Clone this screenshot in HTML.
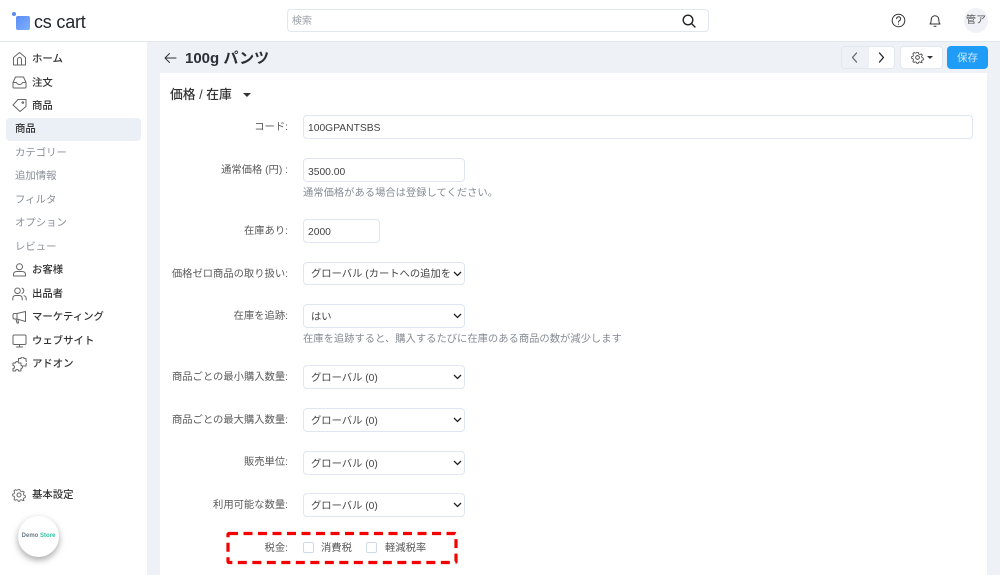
<!DOCTYPE html>
<html lang="ja"><head><meta charset="utf-8"><title>CS-Cart</title>
<style>
html,body{margin:0;padding:0;width:1000px;height:575px;overflow:hidden;background:#eef2f7;font-family:"Liberation Sans","Noto Sans CJK JP",sans-serif;color:#333}
*{box-sizing:border-box}
.a{position:absolute;white-space:nowrap}
#hd{position:absolute;left:0;top:0;width:1000px;height:42px;background:#fff;border-bottom:1px solid #e2e6ee}
#sb{position:absolute;left:0;top:42px;width:147px;height:533px;background:#fff}
#card{position:absolute;left:160px;top:73px;width:827px;height:502px;background:#fff}
.n{position:absolute;left:32px;font-size:10.4px;line-height:16px;font-weight:500;color:#333;white-space:nowrap;margin-top:2px}
.s{position:absolute;left:15px;font-size:10.4px;line-height:16px;color:#8a8f97;white-space:nowrap;margin-top:2px}
.l{position:absolute;right:712px;font-size:10.3px;line-height:16px;color:#5a5a5a;text-align:right;white-space:nowrap;margin-top:2px}
.f{position:absolute;left:303px;background:#fff;border:1px solid #dfe6f1;border-radius:4px;font-size:10.3px;color:#444;padding-left:4px;white-space:nowrap;overflow:hidden}
.sel{width:162px;padding-left:7px}
.sel svg{position:absolute;right:2px;top:8px}
.h{position:absolute;left:303px;font-size:10.3px;line-height:14px;color:#868b93;white-space:nowrap}
svg.i{position:absolute;fill:none;stroke:#666;stroke-width:1;stroke-linecap:round;stroke-linejoin:round}
</style></head><body>
<div id="hd"></div>
<div id="sb"></div>
<div id="card"></div>

<!-- logo -->
<div class="a" style="left:16px;top:16px;width:14px;height:14px;border-radius:2px;background:linear-gradient(135deg,#5b8cf7,#7fb0fb)"></div>
<div class="a" style="left:12px;top:12px;width:4px;height:4px;border-radius:50%;background:#5b8cf7"></div>
<div class="a" style="left:34px;top:12px;font-size:18px;line-height:20px;color:#20242e;letter-spacing:-.2px">cs cart</div>

<!-- search -->
<div class="a" style="left:287px;top:9px;width:422px;height:23px;border:1px solid #e2e6ee;border-radius:4px;background:#fff"></div>
<div class="a" style="left:292px;top:15px;font-size:10px;line-height:14px;color:#9a9ea6">検索</div>
<svg class="i" style="left:682px;top:14px;stroke:#222;stroke-width:1.4" width="14" height="14" viewBox="0 0 14 14"><circle cx="6" cy="6" r="4.8"/><path d="M9.6 9.6L13 13"/></svg>

<!-- top right -->
<svg class="i" style="left:891px;top:13px;stroke:#333" width="15" height="15" viewBox="0 0 15 15"><circle cx="7.5" cy="7.5" r="6.3"/><path d="M5.6 5.8a2 2 0 1 1 2.9 1.8c-.7.4-1 .8-1 1.5"/><path d="M7.5 11v.2"/></svg>
<svg class="i" style="left:928px;top:13px;stroke:#333" width="14" height="15" viewBox="0 0 14 15"><path d="M2 11c1-1 1.2-2 1.2-4.500a3.800 3.800 0 0 1 7.600 0C10.800 9 11 10 12 11z"/><path d="M6 13.300h2"/></svg>
<div class="a" style="left:964px;top:8px;width:24px;height:25px;border-radius:50%;background:#eff1f6;font-size:10px;line-height:25px;text-align:center;color:#555">管ア</div>

<!-- sidebar -->
<svg class="i" style="left:12px;top:51px" width="15" height="15" viewBox="0 0 15 15"><path d="M1.500 6.500L7.500 1.500l6 5V14h-12z"/><path d="M5.500 14V8.500a2 2 0 0 1 4 0V14"/></svg>
<div class="n" style="top:50px">ホーム</div>
<svg class="i" style="left:12px;top:75px" width="15" height="14" viewBox="0 0 15 14"><path d="M1 7.500L3.500 2h8L14 7.500V12a1 1 0 0 1-1 1H2a1 1 0 0 1-1-1z"/><path d="M1 7.500h3.500c.5 1.500 1.500 2 3 2s2.500-.5 3-2H14"/></svg>
<div class="n" style="top:74px">注文</div>
<svg class="i" style="left:12px;top:98px" width="15" height="14" viewBox="0 0 15 14"><path d="M1 7l5-5.500h8v7L8 13.500z"/><circle cx="10.800" cy="4.500" r=".8"/></svg>
<div class="n" style="top:97px">商品</div>
<div class="a" style="left:6px;top:118px;width:135px;height:23px;background:#ebeff6;border-radius:4px"></div>
<div class="n" style="left:15px;top:120px">商品</div>
<div class="s" style="top:144px">カテゴリー</div>
<div class="s" style="top:167px">追加情報</div>
<div class="s" style="top:191px">フィルタ</div>
<div class="s" style="top:214px">オプション</div>
<div class="s" style="top:238px">レビュー</div>
<svg class="i" style="left:12px;top:263px" width="15" height="14" viewBox="0 0 15 14"><circle cx="7.500" cy="3.800" r="3"/><path d="M1.500 13v-1.500c0-2 1.500-3 3.500-3h5c2 0 3.500 1 3.500 3V13z"/></svg>
<div class="n" style="top:261px">お客様</div>
<svg class="i" style="left:12px;top:287px" width="15" height="14" viewBox="0 0 15 14"><circle cx="5.500" cy="3.800" r="2.800"/><path d="M.8 13v-1.500c0-2 1.200-3 3-3h3.400c1.800 0 3 1 3 3V13"/><path d="M10 1.200a2.800 2.800 0 0 1 0 5.200M12 8.700c1.300.4 2.200 1.300 2.200 2.800V13"/></svg>
<div class="n" style="top:285px">出品者</div>
<svg class="i" style="left:12px;top:310px" width="15" height="14" viewBox="0 0 15 14"><path d="M13.500 1.500v10L5 9H2.500a1.500 1.500 0 0 1-1.500-1.500V5a1.500 1.500 0 0 1 1.500-1.500H5z"/><path d="M5 3.500V9M4 9l1 4h1.500l-.6-3.700"/></svg>
<div class="n" style="top:308px">マーケティング</div>
<svg class="i" style="left:12px;top:334px" width="15" height="14" viewBox="0 0 15 14"><rect x="1" y="1" width="13" height="9.500" rx="1.200"/><path d="M7.500 10.500V13M4.500 13h6"/></svg>
<div class="n" style="top:332px">ウェブサイト</div>
<svg class="i" style="left:12px;top:357px" width="15" height="15" viewBox="0 0 15 15"><path d="M1 6h2.500a1.500 1.500 0 1 1 3 0H9v2.500a1.500 1.500 0 1 1 0 3V14H6.500a1.500 1.500 0 1 0-3 0H1v-2.500a1.500 1.500 0 1 0 0-3z"/><path d="M6.500 4V1.500H9a1.500 1.500 0 1 1 3 0H14V4a1.500 1.500 0 1 1 0 3v2h-3"/></svg>
<div class="n" style="top:355px">アドオン</div>
<svg class="i" style="left:12px;top:488px" width="14" height="14" viewBox="0 0 14 14"><circle cx="7" cy="7" r="2"/><path d="M6 1h2l.4 1.700 1.500.7 1.600-.8 1.300 1.500-.9 1.500.5 1.600 1.600.6v2l-1.600.5-.6 1.500.8 1.500L11 13l-1.500-.8-1.300.5L7.800 14H6.200l-.5-1.300-1.500-.5-1.500.8L1.400 11.500l.8-1.500-.6-1.500L0 8V6l1.600-.5.600-1.500-.8-1.500L2.800 1l1.500.8 1.300-.5z" transform="translate(.7 .7) scale(.9)"/></svg>
<div class="n" style="top:486px">基本設定</div>
<div class="a" style="left:18px;top:516px;width:41px;height:41px;border-radius:50%;background:#fff;box-shadow:0 3px 7px rgba(0,0,0,.35);font-size:6px;line-height:41px;text-align:center;font-weight:700;color:#6d7a85">Demo <span style="color:#2fc4a0">Store</span></div>

<!-- title bar -->
<svg class="i" style="left:164px;top:52px;stroke:#333" width="13" height="12" viewBox="0 0 13 12"><path d="M12 6H1.500M5.500 1.500L1 6l4.500 4.500"/></svg>
<div class="a" style="left:185px;top:48px;font-size:15px;line-height:22px;font-weight:700;color:#2c2f36">100g パンツ</div>

<div class="a" style="left:841px;top:46px;width:54px;height:23px;border-radius:4px;background:#fff;border:1px solid #e2e7f0;overflow:hidden"><div style="width:27px;height:23px;background:#eef2f7"></div></div>
<svg class="i" style="left:851px;top:52px;stroke:#666;stroke-width:1.300" width="7" height="11" viewBox="0 0 7 11"><path d="M5.500 1L1.500 5.500 5.500 10"/></svg>
<svg class="i" style="left:878px;top:52px;stroke:#222;stroke-width:1.300" width="7" height="11" viewBox="0 0 7 11"><path d="M1.500 1L5.500 5.500 1.500 10"/></svg>
<div class="a" style="left:900px;top:46px;width:43px;height:23px;border-radius:4px;background:#fff;border:1px solid #e2e7f0"></div>
<svg class="i" style="left:911px;top:51px;stroke:#444" width="13" height="13" viewBox="0 0 14 14"><circle cx="7" cy="7" r="2"/><path d="M6 1h2l.4 1.700 1.500.7 1.600-.8 1.300 1.500-.9 1.500.5 1.600 1.600.6v2l-1.600.5-.6 1.500.8 1.500L11 13l-1.500-.8-1.300.5L7.800 14H6.200l-.5-1.300-1.500-.5-1.500.8L1.400 11.500l.8-1.500-.6-1.500L0 8V6l1.600-.5.600-1.500-.8-1.500L2.800 1l1.500.8 1.300-.5z" transform="translate(.7 .7) scale(.9)"/></svg>
<div class="a" style="left:927px;top:56px;width:0;height:0;border-left:3px solid transparent;border-right:3px solid transparent;border-top:3px solid #333"></div>
<div class="a" style="left:947px;top:46px;width:41px;height:23px;border-radius:4px;background:#1f9cf6;font-size:10.500px;line-height:24px;text-align:center;color:#cfe9fd">保存</div>

<!-- section -->
<div class="a" style="left:170px;top:85px;font-size:12.800px;line-height:19px;font-weight:500;color:#333">価格 / 在庫</div>
<div class="a" style="left:243px;top:93px;width:0;height:0;border-left:4px solid transparent;border-right:4px solid transparent;border-top:4px solid #333"></div>

<!-- form -->
<div class="l" style="top:118px">コード:</div>
<div class="f" style="top:115px;width:670px;height:24px;line-height:25px">100GPANTSBS</div>

<div class="l" style="top:161px">通常価格 (円) :</div>
<div class="f" style="top:158px;width:162px;height:24px;line-height:27px">3500.00</div>
<div class="h" style="top:187px">通常価格がある場合は登録してください。</div>

<div class="l" style="top:222px">在庫あり:</div>
<div class="f" style="top:219px;width:77px;height:24px;line-height:26px">2000</div>

<div class="l" style="top:265px">価格ゼロ商品の取り扱い:</div>
<div class="f sel" style="top:262px;height:23px;line-height:23px">グローバル (カートへの追加を<svg width="9" height="6" viewBox="0 0 9 6" fill="none" stroke="#222" stroke-width="1.300"><path d="M1 1l3.500 3.500L8 1"/></svg></div>

<div class="l" style="top:307px">在庫を追跡:</div>
<div class="f sel" style="top:304px;height:24px;line-height:26px">はい<svg width="9" height="6" viewBox="0 0 9 6" fill="none" stroke="#222" stroke-width="1.300"><path d="M1 1l3.500 3.500L8 1"/></svg></div>
<div class="h" style="top:333px">在庫を追跡すると、購入するたびに在庫のある商品の数が減少します</div>

<div class="l" style="top:368px">商品ごとの最小購入数量:</div>
<div class="f sel" style="top:365px;height:24px;line-height:26px">グローバル (0)<svg width="9" height="6" viewBox="0 0 9 6" fill="none" stroke="#222" stroke-width="1.300"><path d="M1 1l3.500 3.500L8 1"/></svg></div>

<div class="l" style="top:411px">商品ごとの最大購入数量:</div>
<div class="f sel" style="top:408px;height:24px;line-height:26px">グローバル (0)<svg width="9" height="6" viewBox="0 0 9 6" fill="none" stroke="#222" stroke-width="1.300"><path d="M1 1l3.500 3.500L8 1"/></svg></div>

<div class="l" style="top:453px">販売単位:</div>
<div class="f sel" style="top:451px;height:24px;line-height:26px">グローバル (0)<svg width="9" height="6" viewBox="0 0 9 6" fill="none" stroke="#222" stroke-width="1.300"><path d="M1 1l3.500 3.500L8 1"/></svg></div>

<div class="l" style="top:496px">利用可能な数量:</div>
<div class="f sel" style="top:493px;height:24px;line-height:26px">グローバル (0)<svg width="9" height="6" viewBox="0 0 9 6" fill="none" stroke="#222" stroke-width="1.300"><path d="M1 1l3.500 3.500L8 1"/></svg></div>

<div class="l" style="top:539px">税金:</div>
<div class="a" style="left:303px;top:542px;width:11px;height:11px;border:1px solid #cfd9ea;border-radius:2px;background:#fff"></div>
<div class="a" style="left:321px;top:541px;font-size:10.300px;line-height:16px;color:#555">消費税</div>
<div class="a" style="left:366px;top:542px;width:11px;height:11px;border:1px solid #cfd9ea;border-radius:2px;background:#fff"></div>
<div class="a" style="left:385px;top:541px;font-size:10.300px;line-height:16px;color:#555">軽減税率</div>

<svg class="a" style="left:225px;top:530px" width="234" height="36" viewBox="0 0 234 36" fill="none"><rect x="3" y="3.500" width="228" height="29" rx="1" stroke="#f40000" stroke-width="3.200" stroke-dasharray="9 5.500"/></svg>
</body></html>
